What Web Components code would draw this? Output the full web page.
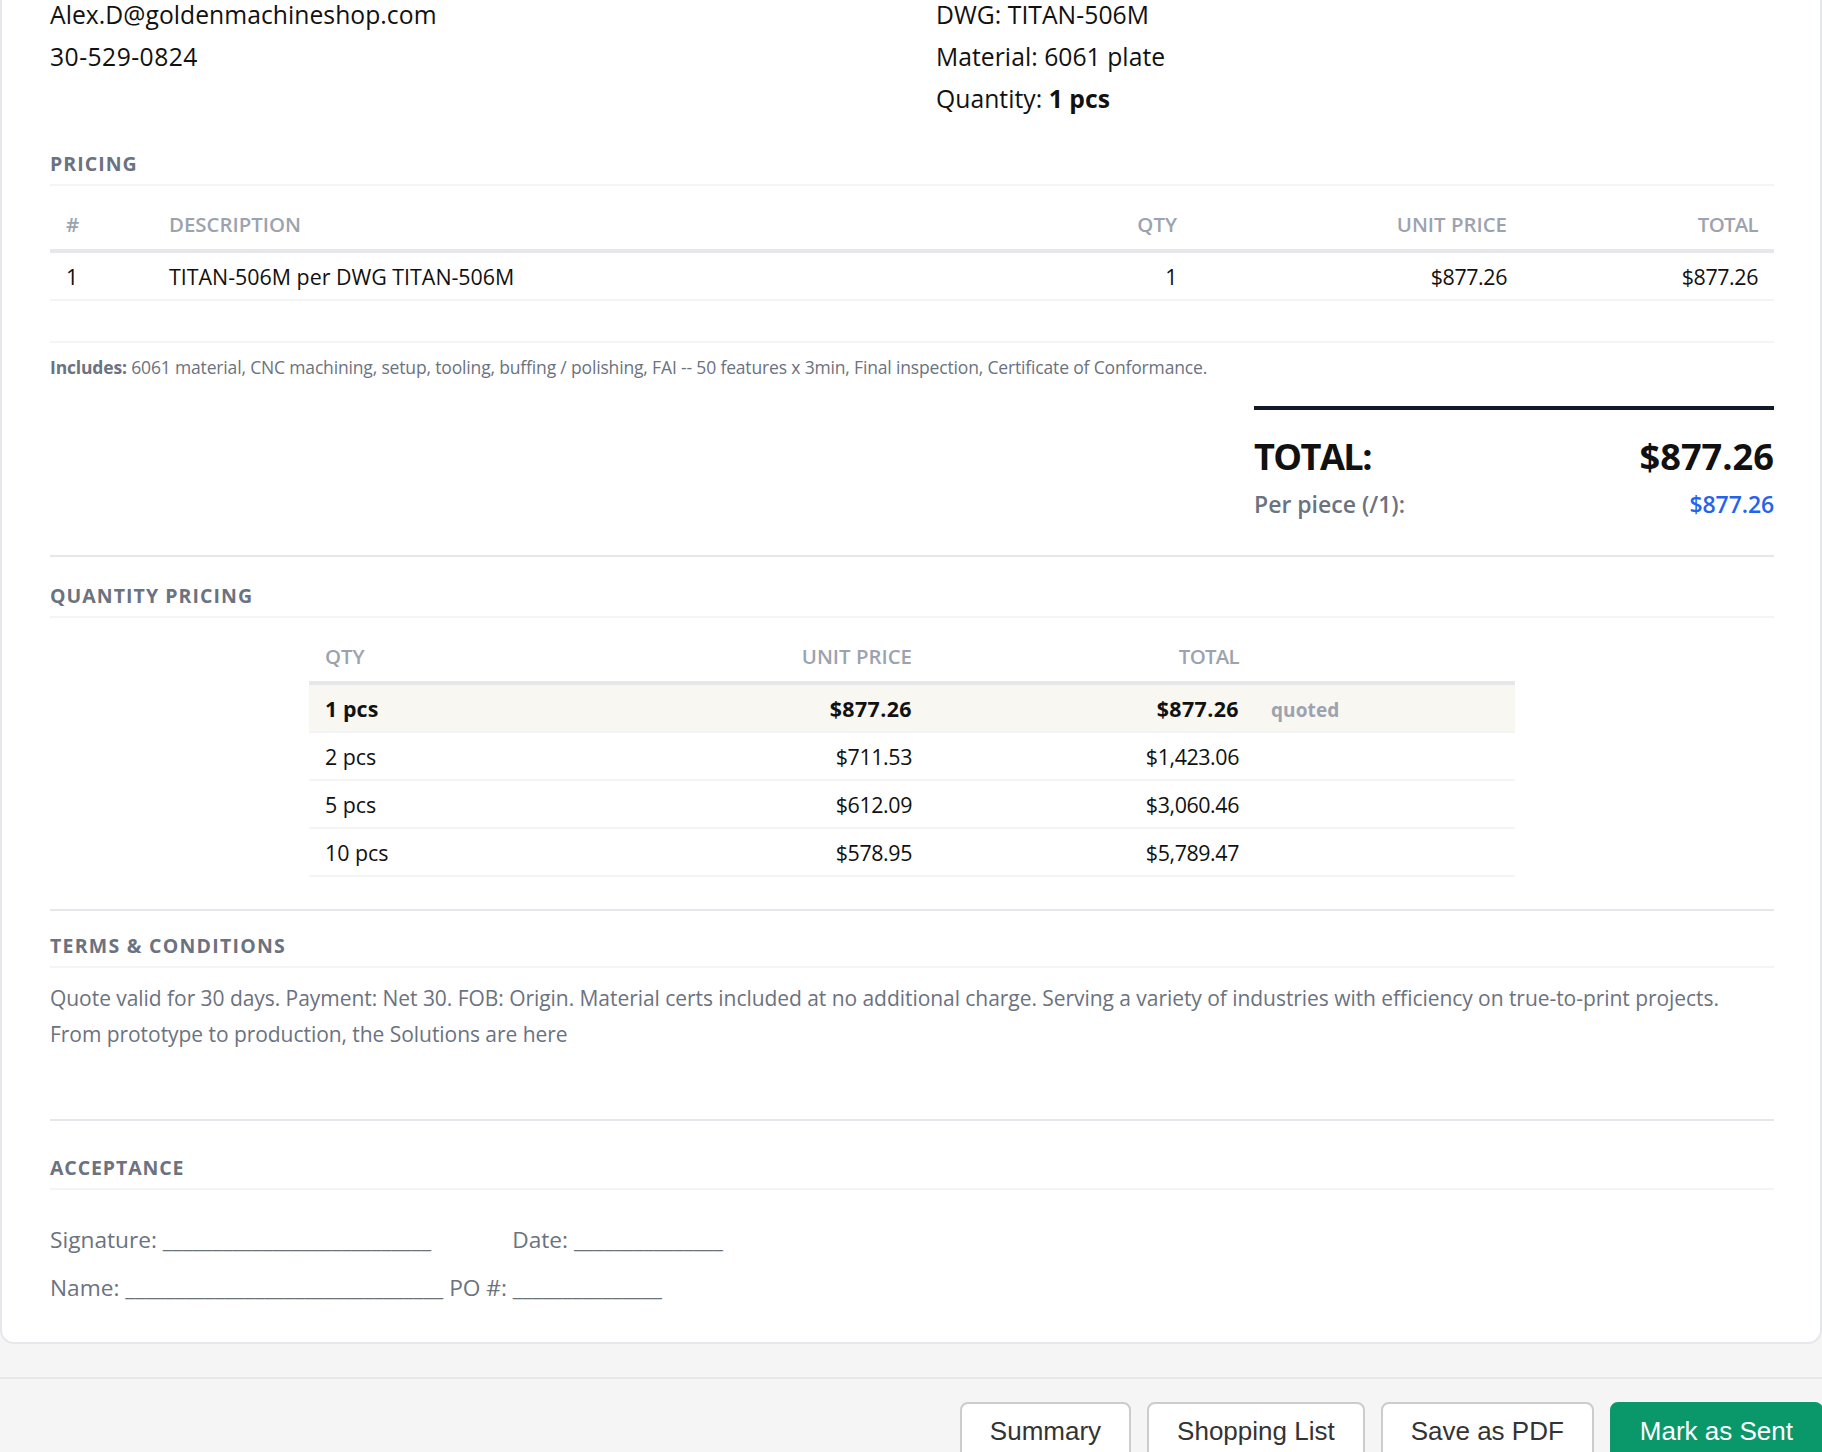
<!DOCTYPE html>
<html>
<head>
<meta charset="utf-8">
<title>Quote</title>
<style>
    html, body { margin: 0; height: 1452px; overflow: hidden; background: #f5f5f5; }
    body { font-family: "Open Sans", "Noto Sans", sans-serif; color: #111827; }
</style>
</head>
<body>
<quote-page>
    <quote-card>
        <quote-info>
            <div>Alex.D@goldenmachineshop.com</div>
            <div class="num">30-529-0824</div>
            <div slot="right">DWG: TITAN-506M</div>
            <div slot="right">Material: 6061 plate</div>
            <div slot="right">Quantity: <b>1 pcs</b></div>
        </quote-info>

        <quote-heading style="--top:29px">PRICING</quote-heading>
        <price-table style="--cols:103px 1fr 160px 330px 251px">
            <price-row kind="head"><span>#</span><span>DESCRIPTION</span><span class="r">QTY</span><span class="r">UNIT PRICE</span><span class="r t">TOTAL</span></price-row>
            <price-row><span>1</span><span>TITAN-506M per DWG TITAN-506M</span><span class="r">1</span><span class="r">$877.26</span><span class="r">$877.26</span></price-row>
        </price-table>
        <quote-includes><b>Includes:</b> 6061 material, CNC machining, setup, tooling, buffing / polishing, FAI -- 50 features x 3min, Final inspection, Certificate of Conformance.</quote-includes>
        <quote-total amount="$877.26" each="$877.26" label="Per piece (/1):"></quote-total>

        <quote-divider style="--top:31px"></quote-divider>
        <quote-heading style="--top:24px">QUANTITY PRICING</quote-heading>
        <price-table style="--cols:310px 309px 327px 1fr;--width:1206px">
            <price-row kind="head"><span>QTY</span><span class="r">UNIT PRICE</span><span class="r t">TOTAL</span></price-row>
            <price-row kind="hi"><span>1 pcs</span><span class="r">$877.26</span><span class="r">$877.26</span><span class="note">quoted</span></price-row>
            <price-row><span>2 pcs</span><span class="r">$711.53</span><span class="r">$1,423.06</span></price-row>
            <price-row><span>5 pcs</span><span class="r">$612.09</span><span class="r">$3,060.46</span></price-row>
            <price-row><span>10 pcs</span><span class="r">$578.95</span><span class="r">$5,789.47</span></price-row>
        </price-table>

        <quote-divider style="--top:32px"></quote-divider>
        <quote-heading style="--top:20px;--ls:1.25px">TERMS &amp; CONDITIONS</quote-heading>
        <quote-terms>Quote valid for 30 days. Payment: Net 30. FOB: Origin. Material certs included at no additional charge. Serving a variety of industries with efficiency on true-to-print projects.<br>From prototype to production, the Solutions are here</quote-terms>

        <quote-divider style="--top:67px"></quote-divider>
        <quote-heading style="--top:32px;--ls:0.9px">ACCEPTANCE</quote-heading>
        <quote-sign>
            <div>Signature: ___________________________<span style="display:inline-block;width:81px"></span>Date: _______________</div>
            <div>Name: ________________________________ PO #: _______________</div>
        </quote-sign>
    </quote-card>
    <quote-actions>
        <action-button>Summary</action-button>
        <action-button>Shopping List</action-button>
        <action-button>Save as PDF</action-button>
        <action-button primary>Mark as Sent</action-button>
    </quote-actions>
</quote-page>

<script>
(function () {
    function define(name, css, html) {
        customElements.define(name, class extends HTMLElement {
            constructor() {
                super();
                let root = this.attachShadow({mode: "open"});
                let tmpl = document.createElement('template');
                tmpl.innerHTML = `<style>${css}</style>${html || '<slot></slot>'}`;
                root.appendChild(tmpl.content.cloneNode(true));
            }
        });
    }

    define('quote-page', `:host { display: block; }`);

    define('quote-card', `
        :host {
            display: block;
            box-sizing: border-box;
            height: 1350px;
            padding: 0 46px 0 48px;
            background: #fff;
            border: 2px solid #e5e7eb;
            border-top: none;
            border-radius: 0 0 14px 14px;
        }
    `);

    define('quote-info', `
        :host {
            display: grid;
            grid-template-columns: 886px 1fr;
            margin-top: -6px;
            font-size: 24.7px;
            line-height: 42px;
            letter-spacing: 0.04px;
            color: #111;
        }
        ::slotted(.num) { letter-spacing: 0.45px; }
    `, `<div><slot></slot></div><div><slot name="right"></slot></div>`);

    define('quote-heading', `
        :host {
            display: block;
            margin-top: var(--top, 0);
            padding-bottom: 5px;
            border-bottom: 2px solid #f3f4f6;
            font-size: 19.5px;
            font-weight: 700;
            line-height: 30px;
            letter-spacing: var(--ls, 1.05px);
            color: #6b7280;
        }
    `);

    define('quote-divider', `
        :host {
            display: block;
            margin-top: var(--top, 0);
            height: 2px;
            background: #e5e7eb;
        }
    `);

    define('price-table', `
        :host {
            display: block;
            box-sizing: border-box;
            width: var(--width, 100%);
            margin: 16px auto 0;
        }
    `);

    define('price-row', `
        :host {
            display: grid;
            grid-template-columns: var(--cols);
            align-items: center;
            box-sizing: border-box;
            height: 48px;
            padding-top: 1px;
            border-bottom: 2px solid #f3f4f6;
            font-size: 21.4px;
            color: #111;
        }
        :host([kind="head"]) {
            height: 51px;
            padding: 0 0 3px;
            border-bottom: 4px solid #e5e7eb;
            font-size: 20.4px;
            font-weight: 600;
            color: #9ca3af;
        }
        :host([kind="hi"]) {
            background: #f8f7f2;
            font-weight: 700;
            letter-spacing: 0.1px;
        }
        ::slotted(span) { padding: 0 16px; }
        ::slotted(.r) { text-align: right; letter-spacing: -0.4px; }
        :host([kind="head"]) ::slotted(.r) { letter-spacing: 0; }
        :host([kind="head"]) ::slotted(.t) { letter-spacing: -0.7px; }
        :host([kind="hi"]) ::slotted(.r) { letter-spacing: 0.4px; }
        ::slotted(.note) {
            padding-top: 2px;
            font-size: 19px;
            font-weight: 700;
            color: #9ca3af;
        }
    `);

    define('quote-includes', `
        :host {
            display: block;
            margin-top: 40px;
            padding: 9px 0 0;
            border-top: 2px solid #f3f4f6;
            font-size: 17.5px;
            line-height: 30px;
            letter-spacing: -0.16px;
            color: #6b7280;
        }
    `);

    customElements.define('quote-total', class extends HTMLElement {
        constructor() {
            super();
            let root = this.attachShadow({mode: "open"});
            root.innerHTML = `
                <style>
                    :host {
                        display: block;
                        box-sizing: border-box;
                        width: 520px;
                        margin: 24px 0 0 auto;
                        border-top: 4px solid #111827;
                    }
                    .row { display: flex; justify-content: space-between; align-items: center; }
                    .grand { height: 46px; margin-top: 23px; font-size: 36.2px; font-weight: 700; color: #111; }
                    .grand span:first-child { letter-spacing: -1.6px; }
                    .each { height: 40px; margin-top: 5px; font-size: 23px; font-weight: 600; color: #6b7280; }
                    .each span:last-child { color: #2563eb; letter-spacing: -0.1px; }
                </style>
                <div class="row grand"><span>TOTAL:</span><span>${this.getAttribute('amount')}</span></div>
                <div class="row each"><span>${this.getAttribute('label')}</span><span>${this.getAttribute('each')}</span></div>
            `;
        }
    });

    define('quote-terms', `
        :host {
            display: block;
            margin-top: 12px;
            font-size: 21px;
            line-height: 36px;
            letter-spacing: -0.05px;
            color: #6b7280;
        }
    `);

    define('quote-sign', `
        :host {
            display: block;
            margin-top: 26px;
            font-size: 22.7px;
            line-height: 48px;
            color: #6b7280;
        }
        ::slotted(div) { white-space: pre; }
    `);

    define('quote-actions', `
        :host {
            display: flex;
            justify-content: flex-end;
            gap: 16px;
            margin: 33px -1px 0 0;
            padding-top: 23px;
            border-top: 2px solid #e5e7eb;
        }
    `);

    define('action-button', `
        :host {
            display: block;
            box-sizing: border-box;
            height: 66px;
            padding: 0 28px;
            border: 2px solid #ccc;
            border-radius: 8px;
            background: #fff;
            font-family: "Liberation Sans", Arial, sans-serif;
            font-size: 26px;
            line-height: 55px;
            color: #333;
        }
        :host([primary]) {
            border-color: #0a986a;
            background: #0a986a;
            color: #fff;
        }
    `);
})();
</script>
</body>
</html>
